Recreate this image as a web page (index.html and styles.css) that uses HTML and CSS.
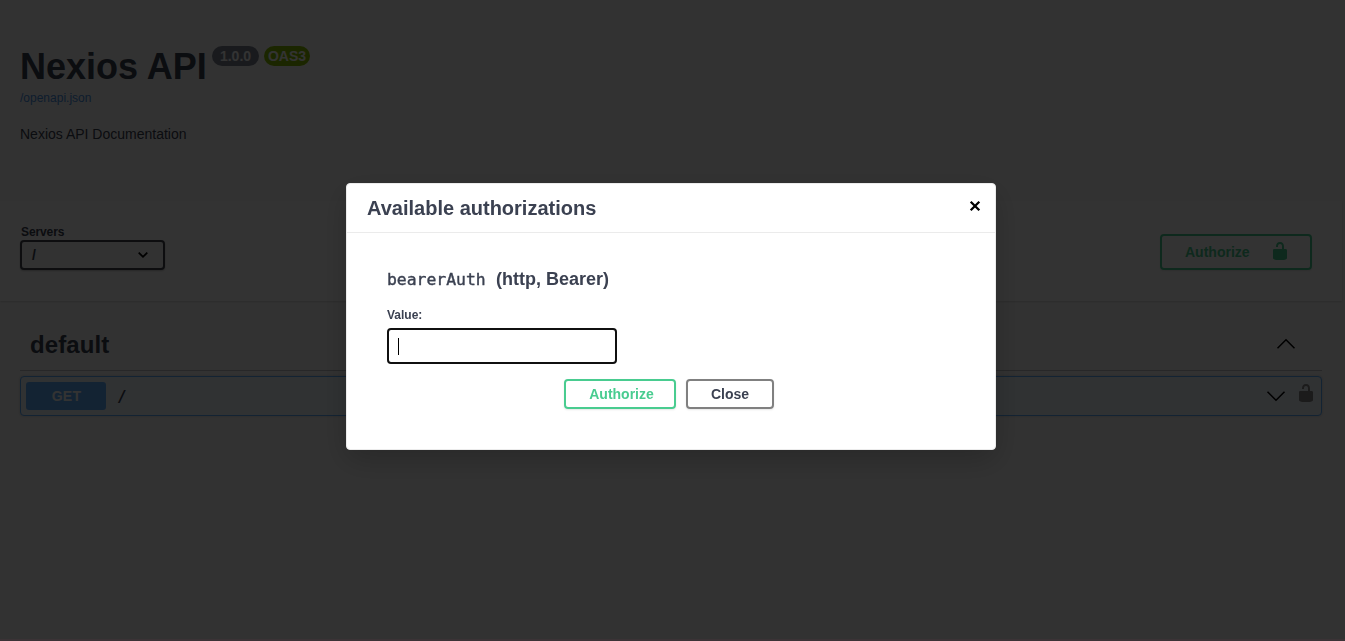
FILE: index.html
```html
<!DOCTYPE html>
<html lang="en">
<head>
<meta charset="utf-8">
<title>Nexios API</title>
<link rel="stylesheet" href="styles.css">
</head>
<body>
<main class="page">
  <header class="info">
    <div class="title-row">
      <h1 class="title">Nexios API</h1>
      <span class="badge version">1.0.0</span>
      <span class="badge oas">OAS3</span>
    </div>
    <a class="spec-link">/openapi.json</a>
    <p class="description">Nexios API Documentation</p>
  </header>
  <section class="schemes">
    <div class="servers">
      <span class="servers-label">Servers</span>
      <div class="select"><span>/</span>
        <svg class="select-arrow" viewBox="0 0 12 8"><path d="M1.700 1.700 6 5.800l4.300-4.100" fill="none" stroke="#000" stroke-width="1.700"/></svg>
      </div>
    </div>
    <button class="btn authorize top-authorize"><span>Authorize</span>
      <svg class="lock" viewBox="0 0 20 20"><path fill="#49cc90" d="M15.800 8H14V5.600C14 2.703 12.665 1 10 1 7.334 1 6 2.703 6 5.600V6h2v-.801C8 3.754 8.797 3 10 3c1.203 0 2 .754 2 2.199V8H4c-.553 0-1 .646-1 1.199V17c0 .549.428 1.139.951 1.307l1.197.387C5.672 18.861 6.550 19 7.100 19h5.800c.549 0 1.428-.139 1.951-.307l1.196-.387c.524-.167.953-.757.953-1.306V9.199C17 8.646 16.352 8 15.800 8z"/></svg>
    </button>
  </section>
  <section class="operations">
    <div class="tag"><h2>default</h2>
      <svg class="chevron tag-chevron" viewBox="0 0 20 12"><path d="M1.500 10.300 10 1.800l8.500 8.500" fill="none" stroke="#000" stroke-width="1.500"/></svg>
    </div>
    <div class="operation">
      <span class="method">GET</span>
      <span class="path">/</span>
      <svg class="chevron" viewBox="0 0 20 12"><path d="M1.500 1.700 10 10.200l8.500-8.500" fill="none" stroke="#000" stroke-width="1.500"/></svg>
      <svg class="lock row-lock" viewBox="0 0 20 20"><path fill="#888" d="M15.800 8H14V5.600C14 2.703 12.665 1 10 1 7.334 1 6 2.703 6 5.600V6h2v-.801C8 3.754 8.797 3 10 3c1.203 0 2 .754 2 2.199V8H4c-.553 0-1 .646-1 1.199V17c0 .549.428 1.139.951 1.307l1.197.387C5.672 18.861 6.550 19 7.100 19h5.800c.549 0 1.428-.139 1.951-.307l1.196-.387c.524-.167.953-.757.953-1.306V9.199C17 8.646 16.352 8 15.800 8z"/></svg>
    </div>
  </section>
</main>
<div class="backdrop">
  <div class="modal" role="dialog">
    <div class="modal-header"><h3>Available authorizations</h3>
      <svg class="close-icon" viewBox="0 0 12 12"><path d="M1.700 1.700l8.600 8.600M10.300 1.700l-8.600 8.600" stroke="#000" stroke-width="2.300"/></svg>
    </div>
    <div class="modal-body">
      <h4><code>bearerAuth</code><span>(http, Bearer)</span></h4>
      <label class="value-label">Value:</label>
      <div class="input"><span class="caret"></span></div>
      <div class="actions">
        <button class="btn authorize">Authorize</button>
        <button class="btn close">Close</button>
      </div>
    </div>
  </div>
</div>
</body>
</html>
```
FILE: styles.css
```css
* { box-sizing: border-box; }
body {
  margin: 0;
  height: 641px;
  overflow: hidden;
  background: #fafafa;
  color: #3b4151;
  font-family: "Liberation Sans", Arial, sans-serif;
}
h1, h2, h3, h4, p { margin: 0; }
svg { display: block; flex: none; }

.info { height: 201px; padding: 45px 20px 0; }
.title-row { display: flex; align-items: flex-start; height: 46px; }
.title { width: 192px; padding-top: 1px; font-size: 36px; line-height: 42px; white-space: nowrap; }
.badge {
  height: 20px;
  margin: 1px 5px 0 0;
  border-radius: 10px;
  color: #fff;
  font-size: 14px;
  font-weight: 700;
  line-height: 21px;
  text-align: center;
}
.version { width: 47px; background: #7d8492; }
.oas { width: 46px; background: #89bf04; }
.spec-link { display: block; color: #4990e2; font-size: 12px; line-height: 14px; }
.description { margin-top: 21px; font-size: 14px; line-height: 16px; }

.schemes {
  display: flex;
  align-items: flex-start;
  justify-content: space-between;
  width: 1342px;
  height: 100px;
  padding: 24px 30px 0 20px;
  background: #fff;
  box-shadow: 0 1px 2px rgba(0, 0, 0, .15);
}
.servers-label { display: block; padding-left: 1px; font-size: 12px; font-weight: 700; line-height: 14px; letter-spacing: -0.1px; }
.select {
  display: flex;
  align-items: center;
  justify-content: space-between;
  width: 145px;
  height: 30px;
  margin-top: 1px;
  padding: 0 14px 0 10px;
  border: 2px solid #41444e;
  border-radius: 4px;
  background: #f7f7f7;
  box-shadow: 0 1px 2px rgba(0, 0, 0, .25);
  font-size: 14px;
  font-weight: 700;
}
.select-arrow { width: 12px; height: 8px; }
.btn {
  height: 30px;
  padding: 0;
  border: 2px solid gray;
  border-radius: 4px;
  background: transparent;
  color: #3b4151;
  font: 700 14px "Liberation Sans", Arial, sans-serif;
  box-shadow: 0 1px 2px rgba(0, 0, 0, .1);
}
.authorize { border-color: #49cc90; color: #49cc90; }
.top-authorize {
  display: flex;
  align-items: center;
  justify-content: space-between;
  width: 152px;
  height: 36px;
  margin-top: 9px;
  padding: 0 20px 0 23px;
}
.lock { width: 20px; height: 20px; }
.top-authorize .lock { margin-top: -2px; }

.operations { padding: 20px 23px 0 20px; }
.tag {
  display: flex;
  align-items: center;
  justify-content: space-between;
  height: 50px;
  padding: 0 26px 3px 10px;
  border-bottom: 1px solid rgba(59, 65, 81, .3);
}
.tag h2 { padding-top: 2px; font-size: 24px; line-height: 28px; letter-spacing: 0.1px; }
.chevron { width: 20px; height: 12px; }
.operation {
  display: flex;
  align-items: center;
  height: 40px;
  margin-top: 5px;
  padding: 0 5px;
  border: 1px solid #61affe;
  border-radius: 4px;
  background: #eff7ff;
  box-shadow: 0 0 3px rgba(0, 0, 0, .19);
}
.method {
  width: 80px;
  height: 28px;
  padding-left: 1px;
  border-radius: 3px;
  background: #61affe;
  color: #fff;
  font-size: 14px;
  font-weight: 700;
  line-height: 28px;
  letter-spacing: 0.3px;
  text-align: center;
}
.path { flex: 1; margin: 2px 0 0 11px; font: 700 16px "DejaVu Sans Mono", monospace; line-height: 18px; }
.row-lock { margin: -7px 0 0 10px; }

.backdrop {
  position: fixed;
  inset: 0;
  display: flex;
  justify-content: center;
  align-items: flex-start;
  padding: 183px 3px 0 0;
  border-bottom: 2px solid rgba(75, 50, 60, .3);
  background: rgba(0, 0, 0, .8);
}
.modal {
  width: 650px;
  height: 267px;
  border: 1px solid #ebebeb;
  border-radius: 4px;
  background: #fff;
  box-shadow: 0 10px 30px rgba(0, 0, 0, .2);
}
.modal-header {
  display: flex;
  align-items: center;
  justify-content: space-between;
  height: 49px;
  padding: 0 14px 0 20px;
  border-bottom: 1px solid #ebebeb;
}
.modal-header h3 { font-size: 20px; line-height: 24px; }
.close-icon { width: 12px; height: 12px; margin-top: -4px; }
.modal-body { padding: 34px 40px 0; }
.modal-body h4 { display: flex; align-items: baseline; height: 24px; font-size: 18px; line-height: 24px; }
.modal-body code {
  width: 109px;
  font: 400 16.400px "DejaVu Sans Mono", monospace;
  -webkit-text-stroke: 0.4px #3b4151;
}
.value-label { display: block; margin-top: 17px; font-size: 12px; font-weight: 700; line-height: 14px; }
.input {
  width: 230px;
  height: 36px;
  margin-top: 6px;
  padding: 8px 9px;
  border: 2px solid #101010;
  border-radius: 4px;
}
.caret { display: block; width: 1px; height: 17px; background: #000; }
.actions { display: flex; justify-content: center; gap: 10px; margin-top: 15px; padding-right: 4px; }
.actions .authorize { width: 112px; padding-left: 3px; }
.actions .close { width: 88px; }
```
